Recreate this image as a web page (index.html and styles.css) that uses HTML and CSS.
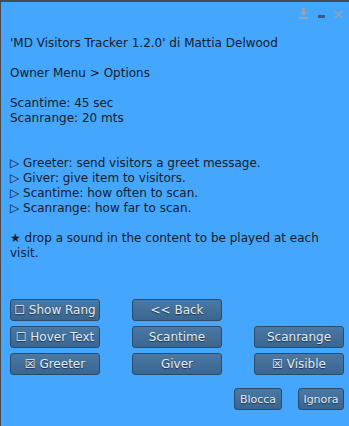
FILE: index.html
```html
<!DOCTYPE html>
<html>
<head>
<meta charset="utf-8">
<link rel="stylesheet" href="styles.css">
</head>
<body>
<div class="win">
  <div class="head">
    <svg class="ic" width="9" height="12" viewBox="0 0 9 12"><path d="M3 0h3v4h2.5L4.5 8 0.5 4H3z" fill="#8fa4b8"/><rect x="0" y="9" width="9" height="2" fill="#8fa4b8"/></svg>
    <svg class="ic min" width="7" height="3" viewBox="0 0 7 3"><rect x="0" y="0" width="7" height="3" fill="#2d5f8c"/></svg>
    <svg class="ic cls" width="9" height="9" viewBox="0 0 9 9"><path d="M1 1L8 8M8 1L1 8" stroke="#8fa4b8" stroke-width="1.6"/></svg>
  </div>
  <div class="msg">'MD Visitors Tracker 1.2.0' di Mattia Delwood

Owner Menu &gt; Options

Scantime: 45 sec
Scanrange: 20 mts


▷ Greeter: send visitors a greet message.
▷ Giver: give item to visitors.
▷ Scantime: how often to scan.
▷ Scanrange: how far to scan.

★ drop a sound in the content to be played at each visit.</div>
  <div class="grid">
    <div class="btn">☐ Show Rang</div>
    <div class="btn">&lt;&lt; Back</div>
    <div></div>
    <div class="btn">☐ Hover Text</div>
    <div class="btn">Scantime</div>
    <div class="btn">Scanrange</div>
    <div class="btn">☒ Greeter</div>
    <div class="btn">Giver</div>
    <div class="btn">☒ Visible</div>
  </div>
  <div class="foot">
    <div class="btn small b1">Blocca</div>
    <div class="btn small b2">Ignora</div>
  </div>
</div>
</body>
</html>
```
FILE: styles.css
```css
html, body {
  margin: 0;
  padding: 0;
}
body {
  width: 349px;
  height: 426px;
  overflow: hidden;
  font-family: "DejaVu Sans", sans-serif;
}
.win {
  box-sizing: border-box;
  width: 349px;
  height: 426px;
  background: #44a6fc;
  border-top: 2px solid #4b4b4b;
  border-left: 1px solid #4b4b4b;
}
.head {
  height: 34px;
  display: flex;
  justify-content: flex-end;
  align-items: flex-start;
  padding-right: 6px;
}
.ic {
  display: block;
  margin-top: 6px;
  margin-left: 9px;
}
.ic.min {
  margin-top: 13px;
  margin-left: 10px;
}
.ic.cls {
  margin-top: 8px;
  margin-left: 9px;
}
.msg {
  white-space: pre-line;
  font-size: 12px;
  line-height: 15px;
  color: #16202c;
  padding-left: 9px;
  padding-right: 8px;
  height: 263px;
}
.grid {
  display: grid;
  grid-template-columns: 90px 90px 90px;
  grid-auto-rows: 22px;
  column-gap: 32px;
  row-gap: 5px;
  padding-left: 9px;
}
.btn {
  box-sizing: border-box;
  display: flex;
  align-items: center;
  justify-content: center;
  border: 1px solid #2a4b6c;
  border-radius: 3px;
  background: linear-gradient(#4a79a6, #3a658f);
  color: #e4ecf4;
  font-size: 12px;
  text-shadow: 0 1px 1px #1c3248;
  white-space: nowrap;
}
.foot {
  display: flex;
  padding-left: 233px;
  margin-top: 13px;
}
.small {
  height: 22px;
  font-size: 11px;
}
.b1 {
  width: 48px;
}
.b2 {
  width: 46px;
  margin-left: 16px;
}
```
